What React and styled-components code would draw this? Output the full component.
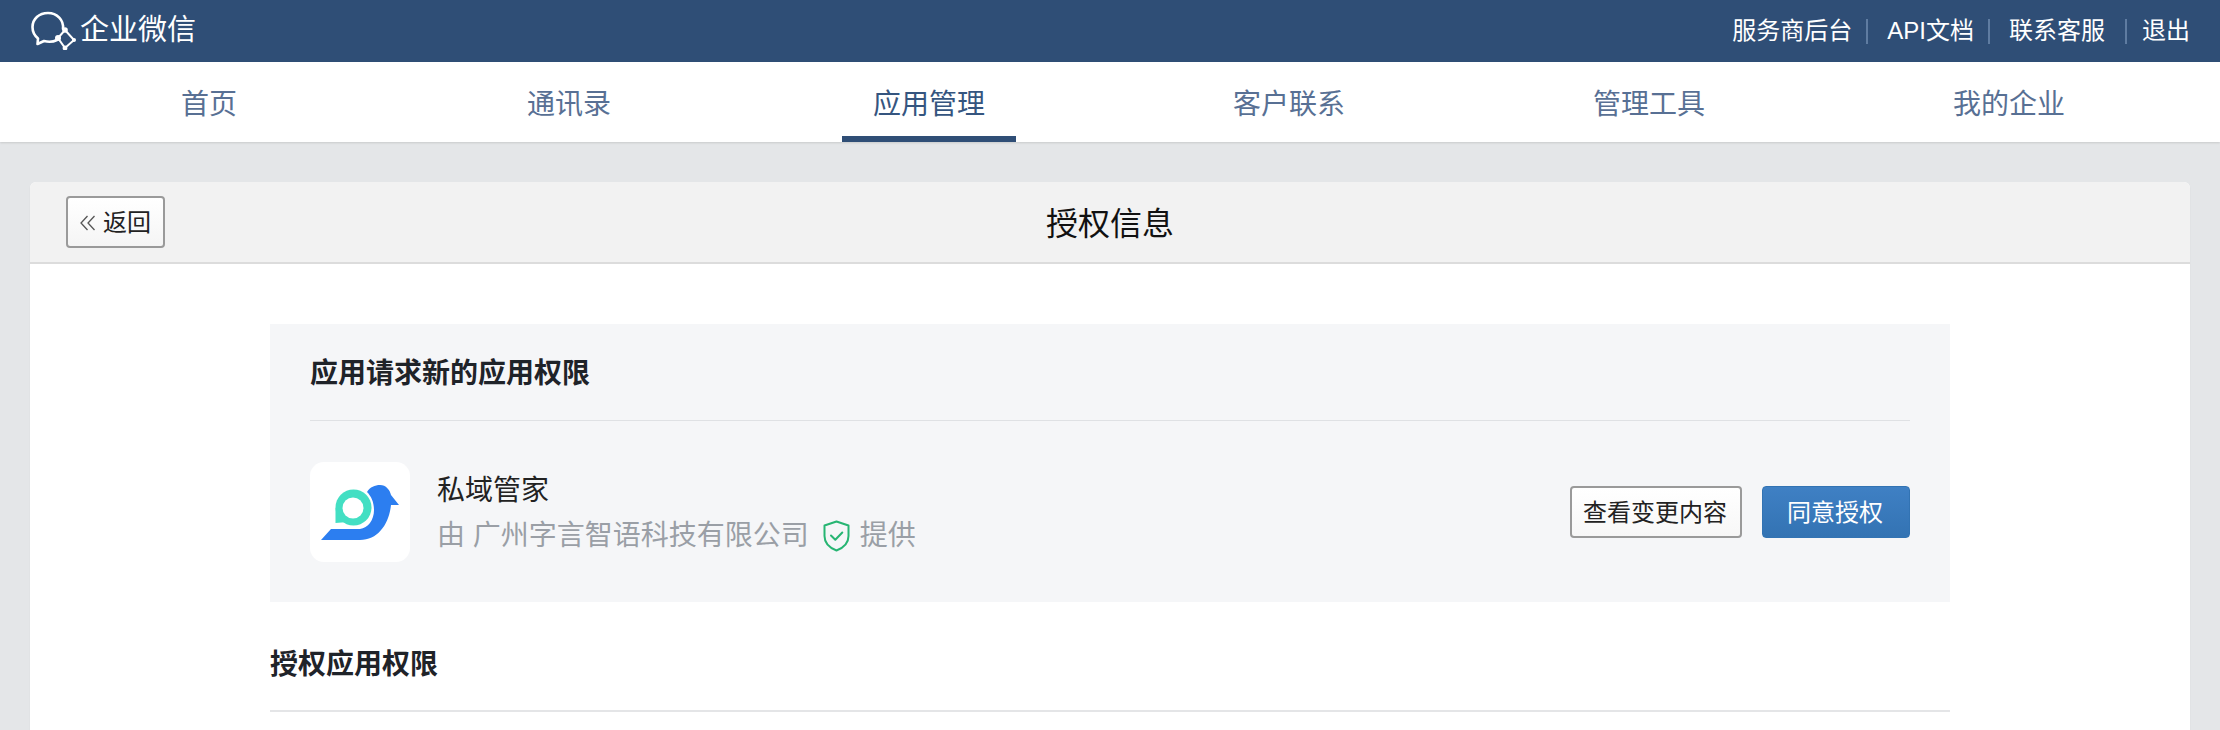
import React from 'react'
import styled, { createGlobalStyle } from 'styled-components'

const Global = createGlobalStyle`
  html, body { margin: 0; padding: 0; height: 100%; overflow: hidden; background: #e4e6e8; }
  body { font-family: "Liberation Sans", "Noto Sans CJK SC", sans-serif; }
  * { box-sizing: border-box; }
`

const Page = styled.div`
  width: 2220px;
  height: 730px;
  overflow: hidden;
`

const TopBar = styled.header`
  height: 62px;
  background: #2f4e76;
  display: flex;
  align-items: center;
  justify-content: space-between;
  padding: 0 30px;
  color: #fff;
`

const Brand = styled.div`
  display: flex;
  align-items: center;
  gap: 4px;
  padding-bottom: 2px;
  font-size: 29px;
`

const BrandName = styled.span`
  padding-bottom: 6px;
`

const TopLinks = styled.div`
  display: flex;
  align-items: center;
  font-size: 24px;
`

const TopLink = styled.a`
  color: #fff;
  line-height: 24px;
  margin-left: ${p => p.$gap || 20}px;
`

const Sep = styled.span`
  width: 2px;
  height: 25px;
  background: #5f7ca1;
  margin-left: ${p => p.$left || 14}px;
`

const Nav = styled.nav`
  height: 80px;
  background: #fff;
  display: flex;
  padding: 0 29px;
  box-shadow: 0 1px 2px rgba(0, 0, 0, 0.12);
`

const NavItem = styled.a`
  width: 360px;
  height: 80px;
  display: flex;
  justify-content: center;
  color: #587094;
  font-size: 28px;
  line-height: 86px;
`

const NavLabel = styled.span`
  padding: 0 31px;
  height: 80px;
  border-bottom: ${p => (p.$active ? '6px solid #2f4e76' : 'none')};
  color: ${p => (p.$active ? '#35557f' : 'inherit')};
`

const Card = styled.main`
  margin: 40px 30px 0;
  height: 600px;
  background: #fff;
  border-radius: 6px 6px 0 0;
  box-shadow: 0 1px 2px rgba(0, 0, 0, 0.06);
`

const CardHead = styled.div`
  position: relative;
  height: 82px;
  background: #f2f2f2;
  border-bottom: 2px solid #dcdcdc;
  border-radius: 6px 6px 0 0;
  text-align: center;
  font-size: 32px;
  line-height: 84px;
  color: #111;
`

const BackButton = styled.button`
  position: absolute;
  left: 36px;
  top: 14px;
  width: 99px;
  height: 52px;
  display: flex;
  align-items: center;
  justify-content: center;
  gap: 8px;
  padding: 2px 0 0;
  background: linear-gradient(#fff, #f5f5f5);
  border: 2px solid #9a9a9a;
  border-radius: 4px;
  font: inherit;
  font-size: 24px;
  color: #222;
`

const Body = styled.div`
  padding: 60px 240px 0;
`

const Panel = styled.section`
  height: 278px;
  background: #f5f6f8;
  padding: 0 40px;
`

const PanelTitle = styled.h2`
  margin: 0;
  height: 97px;
  border-bottom: 1px solid #dfe1e4;
  font-size: 28px;
  line-height: 100px;
  font-weight: 700;
  color: #1f2329;
`

const AppRow = styled.div`
  display: flex;
  align-items: center;
  margin-top: 41px;
`

const AppIcon = styled.div`
  width: 100px;
  height: 100px;
  border-radius: 14px;
  background: #fff;
`

const AppInfo = styled.div`
  margin-left: 27px;
  flex: 1;
  padding-top: 5px;
`

const AppName = styled.div`
  font-size: 28px;
  line-height: 40px;
  color: #222;
`

const AppVendor = styled.div`
  display: flex;
  align-items: center;
  margin-top: 3px;
  font-size: 28px;
  line-height: 44px;
  color: #9a9fa6;
`

const Actions = styled.div`
  display: flex;
  gap: 20px;
  align-items: center;
`

const Btn = styled.button`
  height: 52px;
  width: ${p => p.$w}px;
  padding: 0 2px 4px 0;
  font: inherit;
  font-size: 24px;
  border-radius: 4px;
  color: ${p => (p.$primary ? '#fff' : '#222')};
  border: ${p => (p.$primary ? '1px solid #3273b3' : '2px solid #9a9a9a')};
  background: ${p => (p.$primary ? 'linear-gradient(#3f80c4, #3373b3)' : 'linear-gradient(#fff, #f7f7f7)')};
`

const SectionTitle = styled.h2`
  margin: 36px 0 0;
  height: 74px;
  border-bottom: 2px solid #e4e5e7;
  font-size: 28px;
  line-height: 54px;
  font-weight: 700;
  color: #1f2329;
`

const ShieldMark = styled.svg`
  width: 27px;
  height: 32px;
  margin: 0 10px 0 14px;
`

const ChatLogo = () => (
  <svg width="46" height="40" viewBox="0 0 46 40" fill="none">
    <path d="M33 19C34 10 27 3 18 3 9 3 2.500 9 2.500 17c0 5 2.500 9 5.500 11.500L7.500 34 14 31c4 1 9 1 13-1" stroke="#fff" strokeWidth="2.600" strokeLinecap="round" strokeLinejoin="round" />
    <path d="M28 28l7-8 9 10-9 8z" stroke="#fff" strokeWidth="2" />
    <circle cx="28" cy="28" r="3" fill="#fff" />
    <circle cx="35" cy="20" r="2.800" fill="#fff" />
    <circle cx="44" cy="30" r="2" fill="#fff" />
    <circle cx="35" cy="38" r="2.400" fill="#fff" />
  </svg>
)

const BirdLogo = () => (
  <svg width="100" height="100" viewBox="0 0 100 100">
    <path d="M11 78L21 67H50C58 66 64 58 64 48 64 40 61 34 57 30 60 25 65 23 70 23 76 23 80 28 81 33L89 43H81C79 62 68 78 50 78z" fill="#2c7ef0" />
    <circle cx="43.500" cy="45.500" r="18" fill="#43dfc3" />
    <path d="M25.500 46V61L38 60z" fill="#43dfc3" />
    <circle cx="43" cy="46" r="10.500" fill="#fff" />
  </svg>
)

const Shield = () => (
  <ShieldMark viewBox="0 0 27 32" fill="none">
    <path d="M13.500 1.500L25.500 5.500V16C25.500 23 20 28 13.500 30.500 7 28 1.500 23 1.500 16V5.500z" stroke="#27b573" strokeWidth="2" strokeLinejoin="round" />
    <path d="M8 15.500l4.300 4.300 7-7.300" stroke="#27b573" strokeWidth="2" strokeLinecap="round" strokeLinejoin="round" />
  </ShieldMark>
)

const DoubleLeft = () => (
  <svg width="15" height="16" viewBox="0 0 15 16" fill="none" stroke="#555" strokeWidth="1.300">
    <path d="M7.500 1L1 8l6.500 7M14.500 1L8 8l6.500 7" />
  </svg>
)

const navs = ['首页', '通讯录', '应用管理', '客户联系', '管理工具', '我的企业']

export default function App() {
  return (
    <Page>
      <Global />
      <TopBar>
        <Brand>
          <ChatLogo />
          <BrandName>企业微信</BrandName>
        </Brand>
        <TopLinks>
          <TopLink>服务商后台</TopLink>
          <Sep />
          <TopLink $gap={19}>API文档</TopLink>
          <Sep />
          <TopLink $gap={19}>联系客服</TopLink>
          <Sep $left={20} />
          <TopLink $gap={15}>退出</TopLink>
        </TopLinks>
      </TopBar>
      <Nav>
        {navs.map(n => (
          <NavItem key={n}>
            <NavLabel $active={n === '应用管理'}>{n}</NavLabel>
          </NavItem>
        ))}
      </Nav>
      <Card>
        <CardHead>
          <BackButton>
            <DoubleLeft />
            返回
          </BackButton>
          授权信息
        </CardHead>
        <Body>
          <Panel>
            <PanelTitle>应用请求新的应用权限</PanelTitle>
            <AppRow>
              <AppIcon>
                <BirdLogo />
              </AppIcon>
              <AppInfo>
                <AppName>私域管家</AppName>
                <AppVendor>
                  由 广州字言智语科技有限公司
                  <Shield />
                  提供
                </AppVendor>
              </AppInfo>
              <Actions>
                <Btn $w={172}>查看变更内容</Btn>
                <Btn $w={148} $primary>同意授权</Btn>
              </Actions>
            </AppRow>
          </Panel>
          <SectionTitle>授权应用权限</SectionTitle>
        </Body>
      </Card>
    </Page>
  )
}
